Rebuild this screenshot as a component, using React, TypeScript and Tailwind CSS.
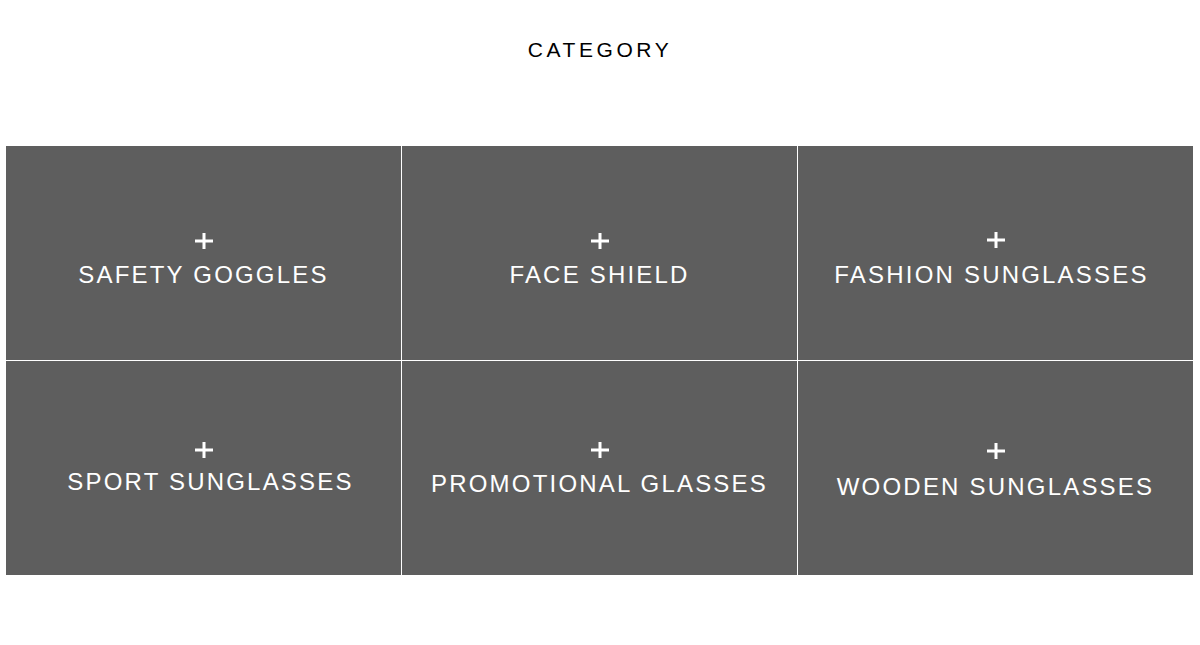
import React from 'react';

type Category = {
  name: string;
  // small per-tile nudges so each label sits where the original one does
  box: string;
  label: string;
};

const categories: Category[] = [
  { name: 'SAFETY GOGGLES', box: 'pt-[87px]', label: 'mt-[12px]' },
  { name: 'FACE SHIELD', box: 'pt-[87px]', label: 'mt-[12px]' },
  { name: 'FASHION SUNGLASSES', box: 'pt-[86px]', label: 'mt-[13px] pr-[8px]' },
  { name: 'SPORT SUNGLASSES', box: 'pt-[81px]', label: 'mt-[10px] pl-[14px]' },
  { name: 'PROMOTIONAL GLASSES', box: 'pt-[81px]', label: 'mt-[12px]' },
  { name: 'WOODEN SUNGLASSES', box: 'pt-[82px]', label: 'mt-[14px]' },
];

const PlusIcon = () => (
  <svg width="18" height="16" viewBox="0 0 18 16" className="block">
    <rect x="0" y="6.5" width="18" height="3" fill="#ffffff" />
    <rect x="7.5" y="0" width="3" height="16" fill="#ffffff" />
  </svg>
);

const App: React.FC = () => {
  return (
    <div className="min-h-[645px] bg-white font-['Liberation_Sans',Arial,sans-serif]">
      <h2 className="pt-[37px] text-center text-[21px] leading-[25px] tracking-[3.6px] text-black">
        CATEGORY
      </h2>

      <div className="mt-[84px] ml-[6px] grid w-[1187px] grid-cols-3 gap-px">
        {categories.map(cat => (
          <a
            key={cat.name}
            href="#"
            className={`flex h-[214px] flex-col items-center bg-[#5e5e5e] text-white ${cat.box}`}
          >
            <PlusIcon />
            <span className={`text-[24px] leading-[28px] tracking-[2.2px] ${cat.label}`}>
              {cat.name}
            </span>
          </a>
        ))}
      </div>
    </div>
  );
};

export default App;
